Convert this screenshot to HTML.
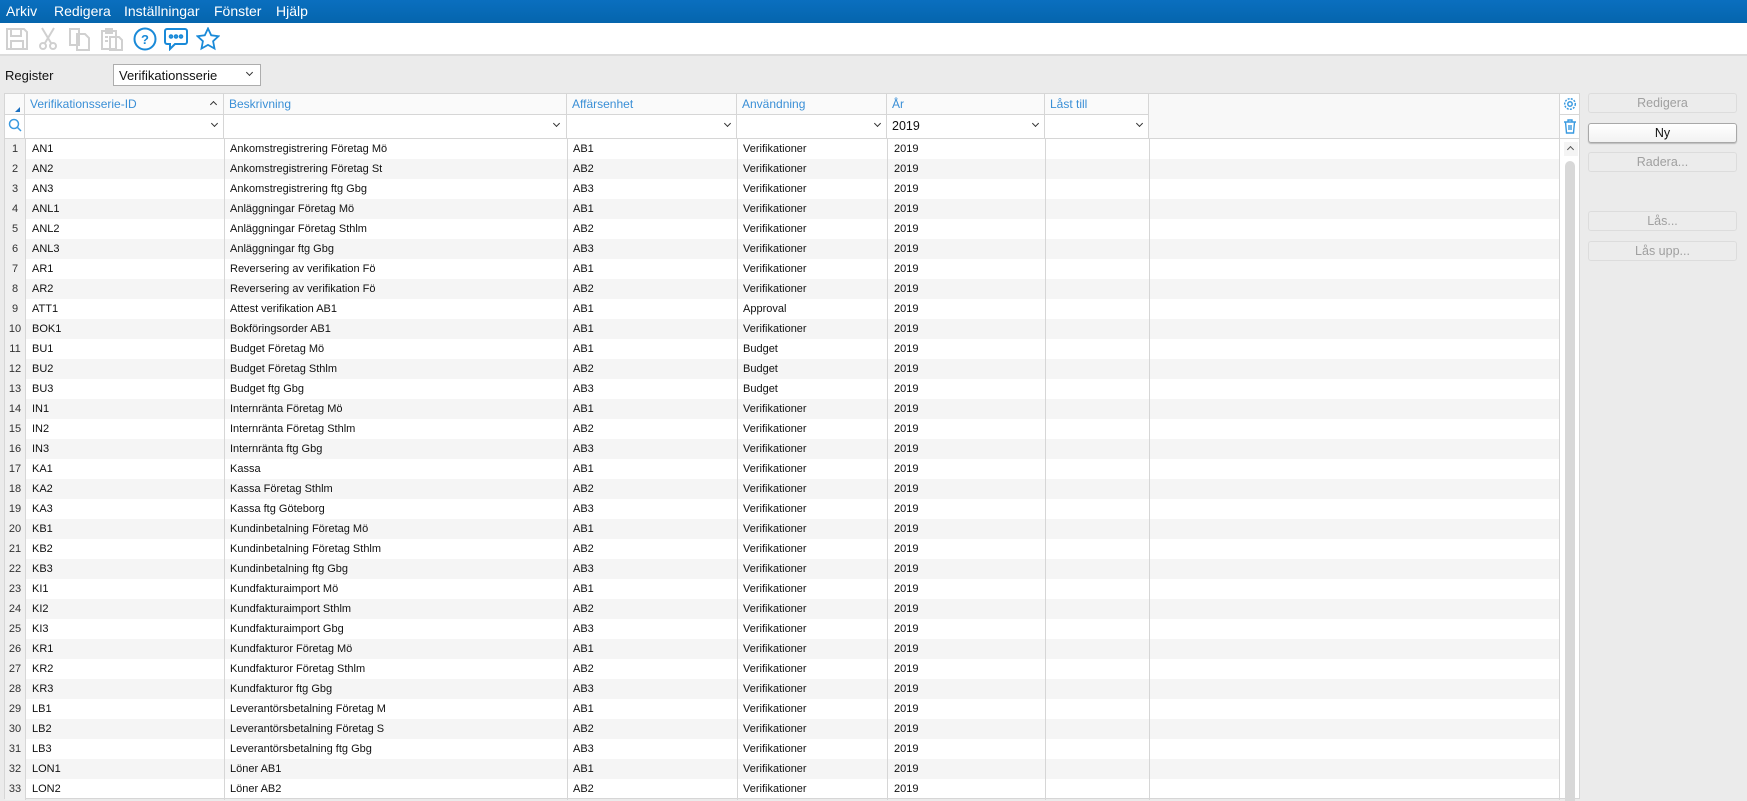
<!DOCTYPE html>
<html><head><meta charset="utf-8">
<style>
*{box-sizing:border-box;margin:0;padding:0}
body{width:1747px;height:799px;overflow:hidden;background:#ebebeb;font-family:"Liberation Sans",sans-serif;font-size:12px;color:#111;position:relative}
.menu{position:absolute;left:0;top:0;width:1747px;height:23px;background:linear-gradient(#0a6fbf,#0565ad);color:#fff;font-size:14px}
.menu span{position:absolute;top:3px}
.tb{position:absolute;left:0;top:23px;width:1747px;height:33px;background:#fff;border-bottom:2px solid #dcdcdc}
.tb svg{position:absolute;top:4px}
.lbl{position:absolute;left:5px;top:68px;font-size:13px}
.sel{position:absolute;left:113px;top:64px;width:148px;height:22px;background:#fff;border:1px solid #adadad;font-size:13px;padding:3px 0 0 5px}
.chev{position:absolute;width:6px;height:6px;border-right:1.3px solid #333;border-bottom:1.3px solid #333;transform:rotate(45deg)}
.grid{position:absolute;left:4px;top:93px;width:1576px;height:706px;background:#fff;border:1px solid #d6d6d6}
.hd{position:absolute;top:0;height:21px;background:#fafafa;border-right:1px solid #d6d6d6;border-bottom:1px solid #d6d6d6;color:#3a8fd6;font-size:12px;padding:3px 0 0 5px}
.fl{position:absolute;top:21px;height:24px;background:#fff;border-right:1px solid #d6d6d6;border-bottom:1px solid #d6d6d6;font-size:12.5px;padding:4px 0 0 5px}
.row{position:absolute;left:0;width:1554px;height:20px}
.row.s{background:#f5f5f5}
.row div{position:absolute;top:4px;font-size:11px}
.vl{position:absolute;top:45px;width:1px;height:661px;background:#d6d6d6}
.btn{position:absolute;left:1588px;width:149px;height:20px;border:1px solid #dcdcdc;border-radius:3px;background:#ececec;color:#a0a0a0;text-align:center;font-size:12.5px;padding-top:2px}
</style></head><body>
<div class="menu"><span style="left:6px">Arkiv</span><span style="left:54px">Redigera</span><span style="left:124px">Inställningar</span><span style="left:214px">Fönster</span><span style="left:276px">Hjälp</span></div>
<div class="tb">
<svg style="left:5px" width="24" height="24" viewBox="0 0 24 24" fill="none" stroke="#d0d0d0" stroke-width="2"><path d="M2 2h17l3 3v17H2z"/><path d="M6 2v7h10V2M6 22v-8h12v8"/></svg>
<svg style="left:38px" width="20" height="24" viewBox="0 0 20 24" fill="none" stroke="#d0d0d0" stroke-width="2"><path d="M4 1l9 15M16 1L7 16"/><circle cx="5" cy="19" r="3"/><circle cx="15" cy="19" r="3"/></svg>
<svg style="left:68px" width="24" height="24" viewBox="0 0 24 24" fill="none" stroke="#d0d0d0" stroke-width="2"><path d="M2 2h9v16H2zM9 7h8l4 4v12H9z"/></svg>
<svg style="left:100px" width="24" height="24" viewBox="0 0 24 24" fill="none" stroke="#d0d0d0" stroke-width="2"><path d="M2 4h14v18H2zM6 2h6v4H6zM10 10h9l3 3v10H10z"/><path d="M5 10h3M5 14h3"/></svg>
<svg style="left:133px" width="24" height="24" viewBox="0 0 24 24" fill="none" stroke="#1a8ad8" stroke-width="2"><circle cx="12" cy="12" r="10.5"/><text x="12" y="17" font-size="13" font-family="Liberation Sans" text-anchor="middle" fill="#1a8ad8" stroke="none" font-weight="bold">?</text></svg>
<svg style="left:164px" width="24" height="24" viewBox="0 0 24 24" fill="none" stroke="#1a8ad8" stroke-width="2"><path d="M3 2h18a2 2 0 012 2v11a2 2 0 01-2 2H11l-5 5v-5H3a2 2 0 01-2-2V4a2 2 0 012-2z"/><circle cx="7" cy="9.5" r="1.3"/><circle cx="12" cy="9.5" r="1.3"/><circle cx="17" cy="9.5" r="1.3"/></svg>
<svg style="left:196px" width="24" height="24" viewBox="0 0 24 24" fill="none" stroke="#1a8ad8" stroke-width="1.8"><path d="M12 1.5l3.2 6.8 7.3.9-5.4 5 1.4 7.3L12 17.9l-6.5 3.6 1.4-7.3-5.4-5 7.3-.9z"/></svg>
</div>
<div class="lbl">Register</div>
<div class="sel">Verifikationsserie<div class="chev" style="left:133px;top:5px;width:5px;height:5px"></div></div>

<div class="grid">
<div style="position:absolute;left:0;top:45px;width:20px;height:661px;background:#f0f0f0"></div>
<div class="hd" style="left:0;width:20px;background:#fafafa"><div style="position:absolute;left:10px;top:13px;width:0;height:0;border-left:5px solid transparent;border-bottom:5px solid #1a6fc0"></div></div>
<div class="hd" style="left:20px;width:199px">Verifikationsserie-ID<div class="chev" style="left:186px;top:8px;transform:rotate(225deg);width:5px;height:5px"></div></div>
<div class="hd" style="left:219px;width:343px">Beskrivning</div>
<div class="hd" style="left:562px;width:170px">Affärsenhet</div>
<div class="hd" style="left:732px;width:150px">Användning</div>
<div class="hd" style="left:882px;width:158px">År</div>
<div class="hd" style="left:1040px;width:104px">Låst till</div>
<div class="hd" style="left:1144px;width:410px;border-right:none;height:45px;background:#f8f8f8"></div>
<div class="fl" style="left:0;width:20px;padding:3px 0 0 3px"><svg width="14" height="14" viewBox="0 0 14 14" fill="none" stroke="#3a9ae0" stroke-width="1.5"><circle cx="6" cy="6" r="4.5"/><path d="M9.5 9.5l3.5 3.5"/></svg></div>
<div class="fl" style="left:20px;width:199px"><div class="chev" style="left:187px;top:6px;width:5px;height:5px"></div></div>
<div class="fl" style="left:219px;width:343px"><div class="chev" style="left:330px;top:6px;width:5px;height:5px"></div></div>
<div class="fl" style="left:562px;width:170px"><div class="chev" style="left:158px;top:6px;width:5px;height:5px"></div></div>
<div class="fl" style="left:732px;width:150px"><div class="chev" style="left:138px;top:6px;width:5px;height:5px"></div></div>
<div class="fl" style="left:882px;width:158px">2019<div class="chev" style="left:146px;top:6px;width:5px;height:5px"></div></div>
<div class="fl" style="left:1040px;width:104px"><div class="chev" style="left:92px;top:6px;width:5px;height:5px"></div></div>
<div style="position:absolute;left:1554px;top:0;width:1px;height:706px;background:#d6d6d6"></div>
<div style="position:absolute;left:1555px;top:0;width:20px;height:21px;border-bottom:1px solid #d6d6d6;padding:3px 0 0 3px"><svg width="14" height="14" viewBox="0 0 14 14" fill="none" stroke="#3a9ae0" stroke-width="1.5"><circle cx="7" cy="7" r="2.2"/><circle cx="7" cy="7" r="5.3" stroke-dasharray="2 1.2"/></svg></div>
<div style="position:absolute;left:1555px;top:21px;width:20px;height:24px;border-bottom:1px solid #d6d6d6;padding:4px 0 0 3px"><svg width="14" height="15" viewBox="0 0 14 15" fill="none" stroke="#3a9ae0" stroke-width="1.4"><path d="M1 3h12M5 3V1h4v2M2.5 3l1 11h7l1-11M6 6v5M8 6v5"/></svg></div>
<div style="position:absolute;left:1559px;top:48px;width:14px;height:14px;background:#f4f4f4"><div class="chev" style="left:4px;top:5px;transform:rotate(225deg);width:5px;height:5px;border-color:#555"></div></div>
<div style="position:absolute;left:1560px;top:67px;width:10px;height:640px;background:#d8d8d8;border-radius:5px 5px 0 0"></div>
<div id="rows"></div>
<div class="vl" style="left:20px"></div><div class="vl" style="left:219px"></div><div class="vl" style="left:562px"></div><div class="vl" style="left:732px"></div><div class="vl" style="left:882px"></div><div class="vl" style="left:1040px"></div><div class="vl" style="left:1144px"></div>
</div>

<div class="btn" style="top:93px">Redigera</div>
<div class="btn" style="top:123px;background:linear-gradient(#fff,#f2f2f2);border-color:#a8a8a8;color:#111;box-shadow:0 1px 1px #bbb">Ny</div>
<div class="btn" style="top:152px">Radera...</div>
<div class="btn" style="top:211px">Lås...</div>
<div class="btn" style="top:241px">Lås upp...</div>

<script>
var d=[["AN1","Ankomstregistrering Företag Mö","AB1","Verifikationer"],["AN2","Ankomstregistrering Företag St","AB2","Verifikationer"],["AN3","Ankomstregistrering ftg Gbg","AB3","Verifikationer"],["ANL1","Anläggningar Företag Mö","AB1","Verifikationer"],["ANL2","Anläggningar Företag Sthlm","AB2","Verifikationer"],["ANL3","Anläggningar ftg Gbg","AB3","Verifikationer"],["AR1","Reversering av verifikation Fö","AB1","Verifikationer"],["AR2","Reversering av verifikation Fö","AB2","Verifikationer"],["ATT1","Attest verifikation AB1","AB1","Approval"],["BOK1","Bokföringsorder AB1","AB1","Verifikationer"],["BU1","Budget Företag Mö","AB1","Budget"],["BU2","Budget Företag Sthlm","AB2","Budget"],["BU3","Budget ftg Gbg","AB3","Budget"],["IN1","Internränta Företag Mö","AB1","Verifikationer"],["IN2","Internränta Företag Sthlm","AB2","Verifikationer"],["IN3","Internränta ftg Gbg","AB3","Verifikationer"],["KA1","Kassa","AB1","Verifikationer"],["KA2","Kassa Företag Sthlm","AB2","Verifikationer"],["KA3","Kassa ftg Göteborg","AB3","Verifikationer"],["KB1","Kundinbetalning Företag Mö","AB1","Verifikationer"],["KB2","Kundinbetalning Företag Sthlm","AB2","Verifikationer"],["KB3","Kundinbetalning ftg Gbg","AB3","Verifikationer"],["KI1","Kundfakturaimport Mö","AB1","Verifikationer"],["KI2","Kundfakturaimport Sthlm","AB2","Verifikationer"],["KI3","Kundfakturaimport Gbg","AB3","Verifikationer"],["KR1","Kundfakturor Företag Mö","AB1","Verifikationer"],["KR2","Kundfakturor Företag Sthlm","AB2","Verifikationer"],["KR3","Kundfakturor ftg Gbg","AB3","Verifikationer"],["LB1","Leverantörsbetalning Företag M","AB1","Verifikationer"],["LB2","Leverantörsbetalning Företag S","AB2","Verifikationer"],["LB3","Leverantörsbetalning ftg Gbg","AB3","Verifikationer"],["LON1","Löner AB1","AB1","Verifikationer"],["LON2","Löner AB2","AB2","Verifikationer"]];
var h="";
d.forEach(function(r,i){h+='<div class="row'+(i%2?' s':'')+'" style="top:'+(45+i*20)+'px"><div style="left:0;width:20px;text-align:center;color:#333;background:#f0f0f0;top:0;height:20px;padding-top:4px">'+(i+1)+'</div><div style="left:27px">'+r[0]+'</div><div style="left:225px">'+r[1]+'</div><div style="left:568px">'+r[2]+'</div><div style="left:738px">'+r[3]+'</div><div style="left:889px">2019</div></div>';});
document.getElementById("rows").innerHTML=h;
</script>
</body></html>
